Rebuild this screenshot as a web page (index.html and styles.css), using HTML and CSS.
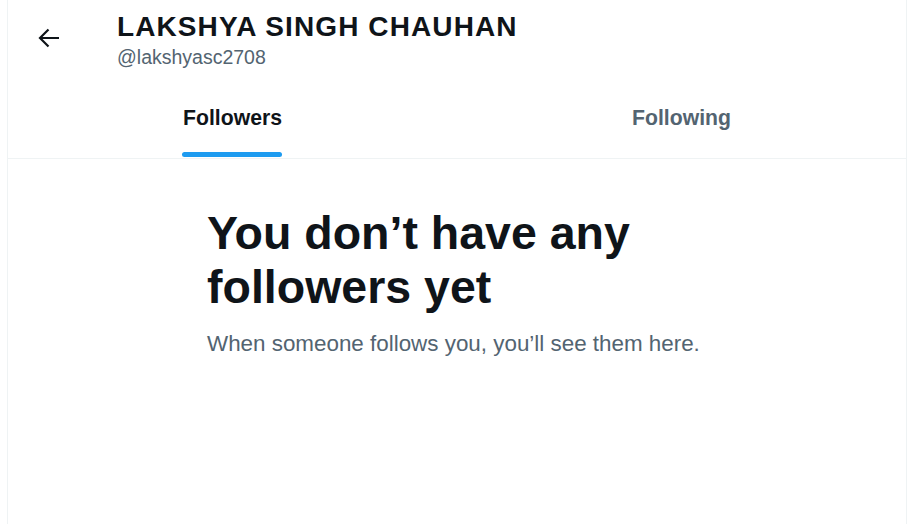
FILE: index.html
```html
<!DOCTYPE html>
<html>
<head>
<meta charset="utf-8">
<link rel="stylesheet" href="styles.css">
</head>
<body>
<main class="column">
  <header class="topbar">
    <div class="back">
      <svg viewBox="0 0 22 20" class="back-icon"><path d="M21 10H2.5M10.5 1.5L2 10l8.5 8.5" fill="none" stroke="#0f1419" stroke-width="2.2"/></svg>
    </div>
    <div class="titles">
      <h1 class="name">LAKSHYA SINGH CHAUHAN</h1>
      <div class="handle">@lakshyasc2708</div>
    </div>
  </header>
  <nav class="tabs">
    <a class="tab active"><span class="tab-label">Followers<span class="indicator"></span></span></a>
    <a class="tab"><span class="tab-label">Following</span></a>
  </nav>
  <section class="empty">
    <h2 class="empty-title">You don’t have any followers yet</h2>
    <p class="empty-text">When someone follows you, you’ll see them here.</p>
  </section>
</main>
</body>
</html>
```
FILE: styles.css
```css
html, body {
  margin: 0;
  padding: 0;
  background: #ffffff;
}
body {
  font-family: "Liberation Sans", Arial, sans-serif;
  color: #0f1419;
  height: 524px;
  overflow: hidden;
}
.column {
  width: 898px;
  margin-left: 7px;
  border-left: 1px solid #eff3f4;
  border-right: 1px solid #eff3f4;
  min-height: 524px;
}
.topbar {
  display: flex;
  align-items: flex-start;
  height: 80px;
}
.back {
  width: 109px;
  display: flex;
  padding-left: 30px;
  padding-top: 28px;
  box-sizing: border-box;
}
.back-icon {
  width: 22px;
  height: 20px;
}
.titles {
  padding-top: 9px;
}
.name {
  margin: 0;
  font-size: 28px;
  font-weight: 700;
  letter-spacing: 1.1px;
  line-height: 36px;
}
.handle {
  font-size: 19.5px;
  color: #536471;
  line-height: 24px;
}
.tabs {
  display: flex;
  height: 78px;
  border-bottom: 1px solid #eff3f4;
}
.tab {
  flex: 1;
  display: flex;
  justify-content: center;
  align-items: center;
  font-size: 21.2px;
  font-weight: 700;
  color: #536471;
}
.tab.active {
  color: #0f1419;
}
.tab-label {
  position: relative;
  height: 100%;
  display: flex;
  align-items: center;
  padding-bottom: 2px;
  box-sizing: border-box;
}
.indicator {
  position: absolute;
  left: -1px;
  right: 0;
  bottom: 1px;
  height: 5px;
  border-radius: 3px;
  background: #1d9bf0;
}
.empty {
  width: 500px;
  margin: 47px auto 0;
}
.empty-title {
  margin: 0;
  font-size: 46.5px;
  line-height: 54px;
  font-weight: 700;
}
.empty-text {
  margin: 15px 0 0;
  font-size: 22.4px;
  line-height: 30px;
  color: #536471;
}
```
